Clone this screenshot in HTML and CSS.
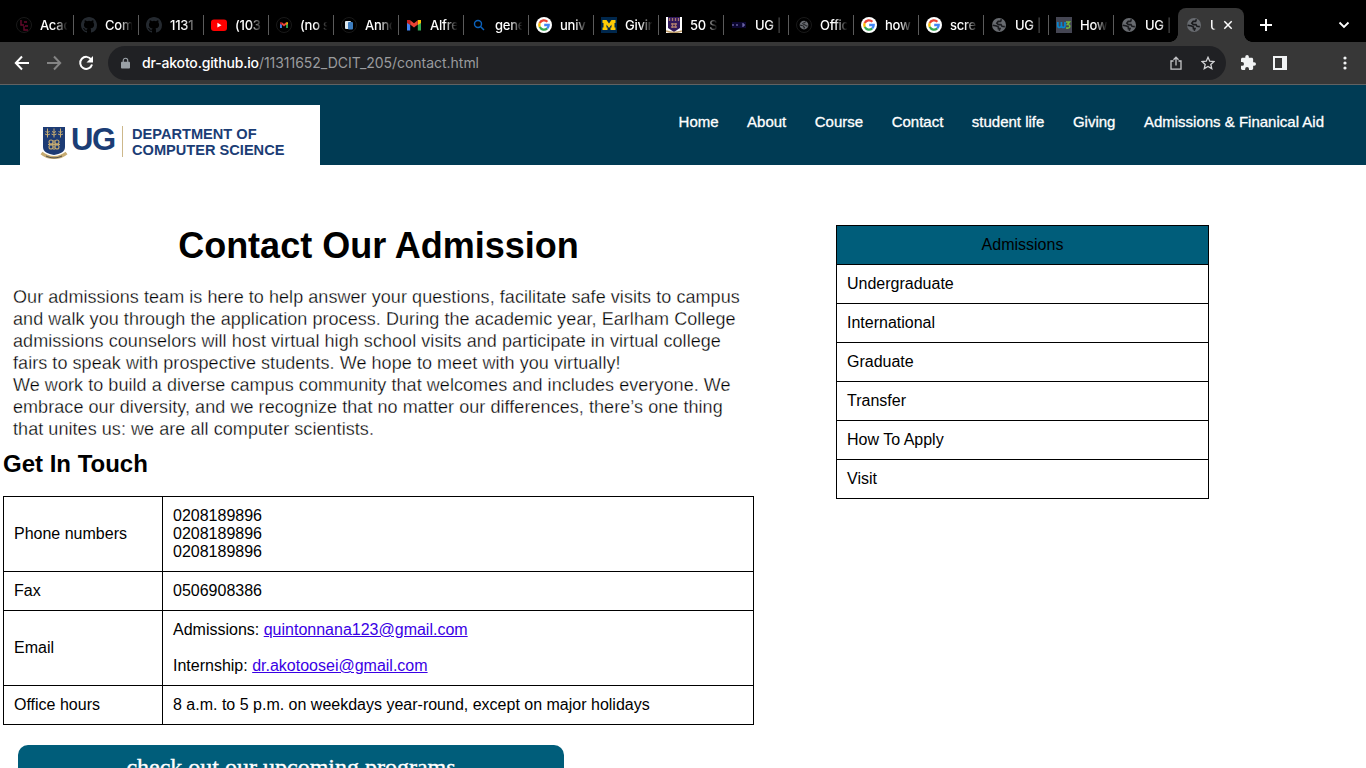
FILE: index.html
```html
<!DOCTYPE html>
<html lang="en">
<head>
<meta charset="utf-8">
<title>UG | Contact</title>
<link rel="stylesheet" href="styles.css">
</head>
<body>
<svg class="defs" aria-hidden="true">
  <defs>
    <symbol id="github" viewBox="0 0 16 16"><path fill="#24292f" d="M8 0C3.58 0 0 3.58 0 8c0 3.54 2.29 6.53 5.47 7.59.4.07.55-.17.55-.38 0-.19-.01-.82-.01-1.49-2.01.37-2.53-.49-2.69-.94-.09-.23-.48-.94-.82-1.13-.28-.15-.68-.52-.01-.53.63-.01 1.08.58 1.23.82.72 1.21 1.87.87 2.33.66.07-.52.28-.87.51-1.07-1.78-.2-3.64-.89-3.64-3.95 0-.87.31-1.59.82-2.15-.08-.2-.36-1.02.08-2.12 0 0 .67-.21 2.2.82a7.6 7.6 0 0 1 4 0c1.53-1.04 2.2-.82 2.2-.82.44 1.1.16 1.92.08 2.12.51.56.82 1.27.82 2.15 0 3.07-1.87 3.75-3.65 3.95.29.25.54.73.54 1.48 0 1.07-.01 1.93-.01 2.2 0 .21.15.46.55.38A8 8 0 0 0 16 8c0-4.42-3.58-8-8-8z"/></symbol>
    <symbol id="google" viewBox="0 0 16 16"><circle cx="8" cy="8" r="8" fill="#fff"/><g fill="none" stroke-width="2.3"><path stroke="#ea4335" d="M3.7 6A4.7 4.7 0 0 1 11.4 4.8"/><path stroke="#fbbc05" d="M3.7 6A4.7 4.7 0 0 0 3.8 10.1"/><path stroke="#34a853" d="M3.8 10.1A4.7 4.7 0 0 0 11.2 11.4"/><path stroke="#4285f4" d="M11.2 11.4A4.7 4.7 0 0 0 12.7 8H8.2"/></g></symbol>
    <symbol id="globe" viewBox="0 0 16 16"><circle cx="8" cy="8" r="7" fill="#686b70"/><path fill="none" stroke="#191a1d" stroke-width="1.6" d="M10.400 2.200L9.600 4.400H7.200L5.800 6.200L7.400 7.600H10L11 9.300L13.800 9.600M1.600 8.200L5.600 9L7.400 10V11.600H9L8.200 13.800"/></symbol>
    <symbol id="gmail" viewBox="0 0 16 16"><path fill="#4285f4" d="M1 5v8.500h3.200V7z"/><path fill="#34a853" d="M11.800 7v6.500H15V5z"/><path fill="#c5221f" d="M1 3h3.200V8L1 6z"/><path fill="#fbbc04" d="M11.800 3H15V6l-3.200 2z"/><path fill="#ea4335" d="M4.200 3.300l3.800 3 3.800-3V7.500l-3.800 3-3.800-3z"/></symbol>
    <symbol id="crest" viewBox="0 0 28 34"><path fill="#1d3b74" d="M3 1h22v20c0 5-5 7-11 8C8 28 3 26 3 21z"/><g stroke="#c6ab71" stroke-width="1" fill="none"><path d="M7.500 2.500v9M14 2.500v9M20.500 2.500v9M5.500 5.500l2 1 2-1M5 8l2.500 1L10 8M12 5.500l2 1 2-1M11.500 8l2.500 1 2.500-1M18.500 5.500l2 1 2-1M18 8l2.500 1L23 8"/></g><g stroke="#c6ab71" stroke-width="1.100" fill="none"><circle cx="11" cy="16" r="2"/><circle cx="17" cy="16" r="2"/><circle cx="11" cy="21" r="2"/><circle cx="17" cy="21" r="2"/><path d="M8 18.500h12M14 14v10"/></g><path fill="none" stroke="#c6ab71" stroke-width="3" d="M1.500 27C5 30 9 31.500 14 31.500S23 30 26.500 27"/><path fill="none" stroke="#50504c" d="M6 30c5 2.500 11 2.500 16 0"/></symbol>
  </defs>
</svg>

<div class="tabs">
  <div class="tab"><svg class="fav" viewBox="0 0 16 16"><circle cx="8" cy="8" r="7.500" fill="none" stroke="#191919"/><path d="M5 3v5h3M9 9h3M8 5h3M8 9v4h4" fill="none" stroke="#66092c" stroke-width="1.400"/></svg><span>Acac</span></div>
  <div class="tab"><svg class="fav"><use href="#github"/></svg><span>Com</span></div>
  <div class="tab"><svg class="fav"><use href="#github"/></svg><span>1131</span></div>
  <div class="tab"><svg class="fav" viewBox="0 0 16 16"><rect y="2.500" width="16" height="11.500" rx="3" fill="#f00"/><path d="M6.400 5.800v4.800L10.500 8.200z" fill="#fff"/></svg><span>(103</span></div>
  <div class="tab"><svg class="fav" viewBox="0 0 16 16"><circle cx="8" cy="8" r="7.500" fill="none" stroke="#191919"/><use href="#gmail" x="3.500" y="3.500" width="9" height="9"/></svg><span>(no s</span></div>
  <div class="tab"><svg class="fav" viewBox="0 0 16 16"><circle cx="8" cy="8" r="7.500" fill="none" stroke="#191919"/><rect x="4" y="4" width="6" height="8" rx="1" fill="#dce8ef"/><rect x="7" y="5" width="5" height="7.500" rx="1" fill="#3c7dc0"/></svg><span>Anno</span></div>
  <div class="tab"><svg class="fav"><use href="#gmail"/></svg><span>Alfre</span></div>
  <div class="tab"><svg class="fav" viewBox="0 0 16 16"><circle cx="7" cy="7" r="3.500" fill="none" stroke="#0b62bd" stroke-width="1.400"/><path d="M9.500 9.500l3.500 3.500" stroke="#0b62bd" stroke-width="1.500"/></svg><span>gene</span></div>
  <div class="tab"><svg class="fav"><use href="#google"/></svg><span>univ</span></div>
  <div class="tab"><svg class="fav" viewBox="0 0 16 16"><path fill="#00274c" d="M0 0h16v16H0z"/><path fill="#ffcb05" d="M1.500 3H5.500L8 6.500L10.500 3H14.500V6H13.500V10.500H14.500V13H9.500V10.500H10.500V7.500L8 11L5.500 7.500V10.500H6.500V13H1.500V10.500H2.500V6H1.500z"/></svg><span>Givin</span></div>
  <div class="tab"><svg class="fav" viewBox="0 0 16 16"><path fill="#fff" d="M0 0h16v16H0z"/><path fill="#31195c" d="M2 0h12v11l-6 4-6-4z"/><path d="M3.500 1v3M6.500 1v3M9.500 1v3M12.500 1v3M5 7h6M5 10h6M6.500 6v5M9.500 6v5" stroke="#a8796c" stroke-width="1.300"/><path d="M0 14q8 3 16 0" fill="none" stroke="#bd9b68" stroke-width="1.500"/></svg><span>50 S</span></div>
  <div class="tab"><svg class="fav" viewBox="0 0 16 16"><path fill="#0b0630" d="M1 5h14v6H1z"/><path d="M2 7v2M5 8h2M11 7h2v2h-2" fill="none" stroke="#8b83cc"/></svg><span>UG |</span></div>
  <div class="tab"><svg class="fav" viewBox="0 0 16 16"><circle cx="8" cy="8" r="7.500" fill="none" stroke="#191919"/><use href="#globe" x="3" y="3" width="10" height="10"/></svg><span>Offic</span></div>
  <div class="tab"><svg class="fav"><use href="#google"/></svg><span>how</span></div>
  <div class="tab"><svg class="fav"><use href="#google"/></svg><span>scre</span></div>
  <div class="tab"><svg class="fav"><use href="#globe"/></svg><span>UG |</span></div>
  <div class="tab"><svg class="fav" viewBox="0 0 16 16"><path fill="#454653" d="M0 0h16v16H0z"/><path d="M1.800 5v3.500q0 2 1.800 2t1.800-2V5M5.400 8.500q0 2 1.800 2t1.800-2V5" fill="none" stroke="#0787cf" stroke-width="1.700"/><path d="M10 5h3.500L11.500 7.500q2.500 0 2.300 2T10 11" fill="none" stroke="#74b93c" stroke-width="1.600"/></svg><span>How</span></div>
  <div class="tab last"><svg class="fav"><use href="#globe"/></svg><span>UG |</span></div>
  <div class="tab active"><svg class="fav"><use href="#globe"/></svg><span>U</span><svg class="close" viewBox="0 0 10 10"><path d="M1.300 1.300l7.400 7.400M8.700 1.300L1.300 8.700" stroke="#fff" stroke-width="1.500"/></svg></div>
  <svg class="plus" viewBox="0 0 12 12"><path d="M6 0v12M0 6h12" stroke="#fff" stroke-width="2"/></svg>
  <svg class="chev" viewBox="0 0 12 8"><path d="M1.500 1.500L6 6l4.500-4.500" fill="none" stroke="#fff" stroke-width="1.800"/></svg>
</div>

<div class="toolbar">
  <svg class="nav-icon" viewBox="0 0 16 16"><path d="M15 8H2M8 1.500L1.800 8L8 14.500" fill="none" stroke="#fff" stroke-width="2"/></svg>
  <svg class="nav-icon" viewBox="0 0 16 16"><path d="M1 8h13M8 1.500L14.200 8L8 14.500" fill="none" stroke="#858585" stroke-width="2"/></svg>
  <svg class="nav-icon" viewBox="0 0 16 16"><path d="M13.200 4.500A6 6 0 1 0 14 9.500" fill="none" stroke="#fff" stroke-width="2"/><path d="M15 1v6.500H8.500z" fill="#fff"/></svg>
  <div class="address">
    <svg class="lock" viewBox="0 0 10 12"><path fill="#9aa0a6" d="M1 4.500h8q1 0 1 1V11q0 1-1 1H1q-1 0-1-1V5.500q0-1 1-1z"/><path d="M2.500 5V3.200a2.500 2.500 0 0 1 5 0V5" fill="none" stroke="#9aa0a6" stroke-width="1.300"/></svg>
    <span class="url"><b>dr-akoto.github.io</b><i>/11311652_DCIT_205/contact.html</i></span>
    <svg class="share" viewBox="0 0 12 14"><path d="M3.500 5H1v8.200h10V5H8.500M6 9.500V1.500M3.500 3.700L6 1.200l2.500 2.500" fill="none" stroke="#c4c5c7" stroke-width="1.300"/></svg>
    <svg class="star" viewBox="0 0 14 14"><path d="M7 1.300l1.750 3.900 4.250.4-3.200 2.850.95 4.200L7 10.450l-3.750 2.200.95-4.200L1 5.600l4.250-.4z" fill="none" stroke="#d3d4d6" stroke-width="1.300"/></svg>
  </div>
  <svg class="puzzle" viewBox="2 1 21 21"><path fill="#f1f3f4" d="M20.500 11H19V7c0-1.100-.9-2-2-2h-4V3.500a2.500 2.500 0 0 0-5 0V5H4c-1.100 0-2 .9-2 2v3.800h1.500a2.700 2.700 0 0 1 0 5.400H2V20c0 1.100.9 2 2 2h3.800v-1.500a2.700 2.700 0 0 1 5.400 0V22H17c1.100 0 2-.9 2-2v-4h1.500a2.500 2.500 0 0 0 0-5z"/></svg>
  <svg class="panel" viewBox="0 0 14 14"><path fill="#f1f3f4" fill-rule="evenodd" d="M0 0h14v14H0zM2 2v10h7V2z"/></svg>
  <svg class="dots" viewBox="0 0 4 14"><g fill="#f1f3f4"><circle cx="2" cy="2" r="1.600"/><circle cx="2" cy="7" r="1.600"/><circle cx="2" cy="12" r="1.600"/></g></svg>
</div>

<header class="site-header">
  <div class="logo">
    <svg class="crest"><use href="#crest"/></svg>
    <span class="ug">UG</span>
    <span class="dept"><span>DEPARTMENT OF</span><br><span>COMPUTER SCIENCE</span></span>
  </div>
  <nav class="menu">
    <a>Home</a><a>About</a><a>Course</a><a>Contact</a><a>student life</a><a>Giving</a><a>Admissions &amp; Finanical Aid</a>
  </nav>
</header>

<main class="content">
  <section class="contact">
    <h1>Contact Our Admission</h1>
    <p>Our admissions team is here to help answer your questions, facilitate safe visits to campus<br>and walk you through the application process. During the academic year, Earlham College<br>admissions counselors will host virtual high school visits and participate in virtual college<br>fairs to speak with prospective students. We hope to meet with you virtually!<br>We work to build a diverse campus community that welcomes and includes everyone. We<br>embrace our diversity, and we recognize that no matter our differences, there’s one thing<br>that unites us: we are all computer scientists.</p>
    <h2>Get In Touch</h2>
    <table class="details">
      <tr><td>Phone numbers</td><td>0208189896<br>0208189896<br>0208189896</td></tr>
      <tr><td>Fax</td><td>0506908386</td></tr>
      <tr><td>Email</td><td>Admissions: <a class="mail">quintonnana123@gmail.com</a><br><br>Internship: <a class="mail">dr.akotoosei@gmail.com</a></td></tr>
      <tr><td>Office hours</td><td>8 a.m. to 5 p.m. on weekdays year-round, except on major holidays</td></tr>
    </table>
    <div class="programs">check out our upcoming programs</div>
  </section>
  <aside>
    <table class="links">
      <tr><th>Admissions</th></tr>
      <tr><td>Undergraduate</td></tr>
      <tr><td>International</td></tr>
      <tr><td>Graduate</td></tr>
      <tr><td>Transfer</td></tr>
      <tr><td>How To Apply</td></tr>
      <tr><td>Visit</td></tr>
    </table>
  </aside>
</main>
</body>
</html>
```
FILE: styles.css
```css
* { box-sizing: border-box; }
body { margin: 0; height: 768px; overflow: hidden; background: #fff; color: #000; font: 16px/18px "Liberation Sans", Arial, sans-serif; }
svg { display: block; flex: none; }
.defs { position: absolute; width: 0; height: 0; }

/* browser tabs */
.tabs { display: flex; height: 42px; padding: 8px 0 0 9px; background: #000; color: #fff; font: 500 13px/16px Inter, sans-serif; }
.tab { display: flex; flex: none; align-items: center; width: 65px; height: 34px; padding-left: 7px; background: linear-gradient(#5b5b5b, #5b5b5b) right 0 top 7px / 1px 20px no-repeat; }
.tab.last { background: none; }
.tab span { width: 29px; margin-left: 8px; letter-spacing: -.25px; white-space: nowrap; -webkit-mask-image: linear-gradient(90deg, #000 50%, transparent 95%); mask-image: linear-gradient(90deg, #000 50%, transparent 95%); }
.fav { width: 16px; height: 16px; }
.tab.active { position: relative; width: 66px; margin-left: -1px; padding-left: 8px; border-radius: 8px 8px 0 0; background: #373737; }
.tab.active::before, .tab.active::after { content: ""; position: absolute; bottom: 0; width: 8px; height: 8px; }
.tab.active::before { left: -8px; background: radial-gradient(circle at 0 0, transparent 7.5px, #373737 8px); }
.tab.active::after { right: -8px; background: radial-gradient(circle at 100% 0, transparent 7.5px, #373737 8px); }
.tab.active span { width: 6px; overflow: hidden; }
.close { width: 10px; height: 10px; margin-left: 7px; }
.plus { width: 12px; height: 12px; margin: 11px 0 0 16px; }
.chev { width: 12px; height: 8px; margin: 13px 16px 0 auto; }

/* browser toolbar */
.toolbar { display: flex; align-items: center; height: 43px; padding: 0 19px 1px 14px; background: #373737; border-bottom: 1px solid #626262; }
.nav-icon { width: 16px; height: 16px; margin-right: 16px; }
.address { display: flex; align-items: center; width: 1118px; height: 34px; margin-left: -2px; padding: 0 11px 0 13px; border-radius: 17px; background: #202124; }
.lock { width: 9px; height: 12px; margin-right: 12px; }
.url { font: 14px/20px Inter, sans-serif; white-space: nowrap; }
.url b { color: #fff; font-weight: 500; letter-spacing: -.17px; }
.url i { color: #9a9b9e; font-style: normal; letter-spacing: -.03px; }
.share { width: 12px; height: 14px; margin-left: auto; }
.star { width: 14px; height: 14px; margin-left: 19px; }
.puzzle { width: 15px; height: 15px; margin-left: 15px; }
.panel { width: 14px; height: 14px; margin-left: 17px; }
.dots { width: 4px; height: 14px; margin-left: auto; }

/* site header */
.site-header { display: flex; justify-content: space-between; height: 80px; padding: 20px 42px 0 20px; background: #003b54; }
.logo { display: flex; width: 300px; height: 60px; padding: 21px 0 0 20px; background: #fff; color: #1b3d75; font-weight: bold; }
.crest { width: 28px; height: 34px; }
.ug { width: 45px; margin-left: 3px; font-size: 31px; line-height: 28px; letter-spacing: -1.5px; }
.dept { height: 31px; margin-left: 6px; padding-left: 9px; border-left: 1px solid #cdb88b; font-size: 14.6px; line-height: 16px; white-space: nowrap; }
.menu { display: flex; gap: 28.5px; padding-top: 8px; color: #fff; font-size: 15px; -webkit-text-stroke: .3px #fff; }

/* page content */
.content { display: flex; padding: 60px 0 0 3px; }
.contact { width: 751px; }
h1 { margin: 0; font-size: 36px; line-height: 42px; text-align: center; }
p { margin: 19px 0 0 10px; font-size: 18px; line-height: 22px; letter-spacing: .06px; white-space: nowrap; -webkit-text-stroke: .3px #fff; }
h2 { margin: 9px 0 0; font-size: 24px; line-height: 29px; }
table { border-collapse: collapse; }
td, th { padding: 10px; border: 1px solid #000; font-weight: normal; text-align: left; }
.details { width: 751px; margin-top: 18px; }
.details td:first-child { width: 159px; }
.mail { color: #3a00e5; text-decoration: underline; }
.programs { width: 546px; height: 50px; margin: 20px 0 0 15px; padding-top: 8px; border-radius: 10px; background: #005d7a; color: #fff; font: 24px/28px "Liberation Serif", serif; text-align: center; -webkit-text-stroke: .4px #fff; }
aside { margin-left: 82px; }
.links { width: 373px; }
.links th { background: #005d7a; text-align: center; }
```
